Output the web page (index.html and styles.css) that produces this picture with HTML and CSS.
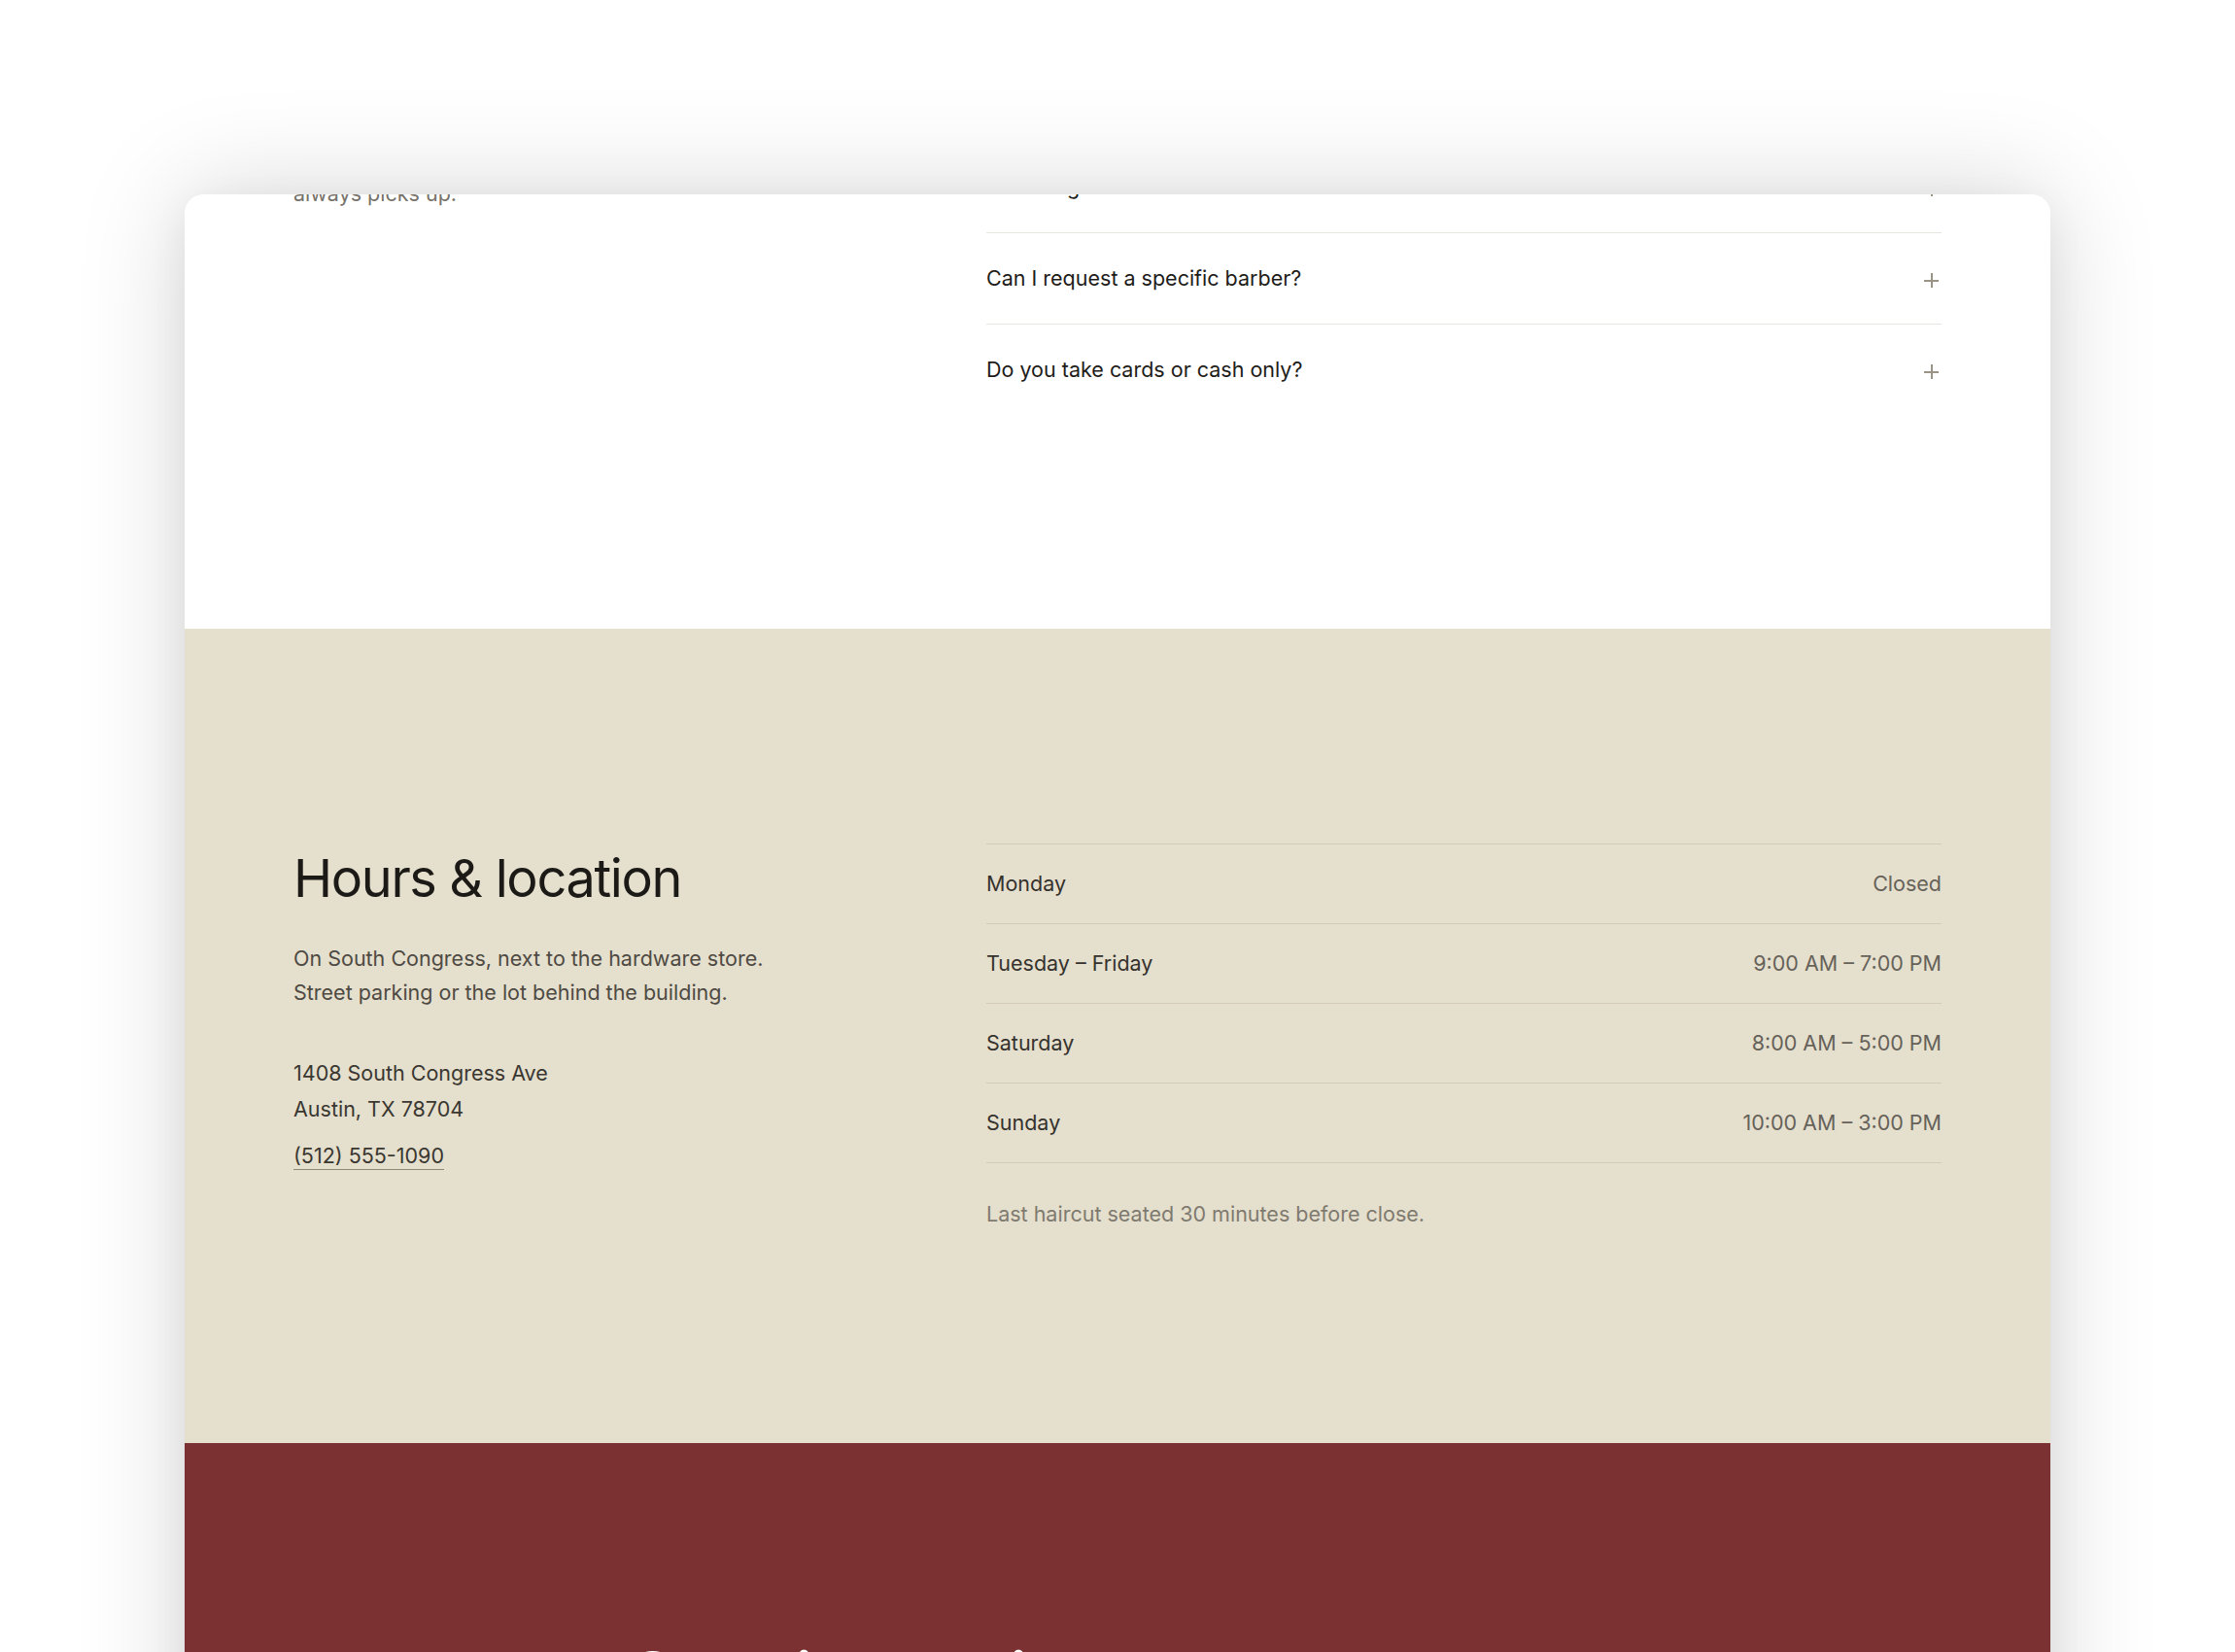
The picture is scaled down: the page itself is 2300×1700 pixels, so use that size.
FILE: index.html
```html
<!DOCTYPE html>
<html lang="en">
<head>
<meta charset="utf-8">
<title>Barbershop – Hours &amp; location</title>
<link rel="stylesheet" href="styles.css">
</head>
<body>
<div class="window">
  <div class="page">
    <section class="faq">
      <div class="container split">
        <div class="faq-intro">
          <h2 class="section-title">Questions</h2>
          <p class="lead">Anything else you want to know before you come in?<br>Most answers are right here. If not, give the<br>shop a ring during business hours — we keep<br>the phone behind the chair, and somebody<br>always picks up.</p>
        </div>
        <div class="faq-list">
          <div class="faq-item"><span class="q">Do I need an appointment?</span><span class="plus"></span></div>
          <div class="faq-item"><span class="q">Do you cut kids' hair?</span><span class="plus"></span></div>
          <div class="faq-item"><span class="q">How long does a haircut take?</span><span class="plus"></span></div>
          <div class="faq-item"><span class="q">Can I request a specific barber?</span><span class="plus"></span></div>
          <div class="faq-item"><span class="q">Do you take cards or cash only?</span><span class="plus"></span></div>
        </div>
      </div>
    </section>

    <section class="visit">
      <div class="container split">
        <div class="visit-info">
          <h2 class="section-title">Hours &amp; location</h2>
          <p class="lead dark">On South Congress, next to the hardware store.<br>Street parking or the lot behind the building.</p>
          <address class="address">1408 South Congress Ave<br>Austin, TX 78704</address>
          <a class="phone" href="tel:5125551090">(512) 555-1090</a>
        </div>
        <div class="hours">
          <div class="hours-table">
            <div class="hours-row"><span class="day">Monday</span><span class="time">Closed</span></div>
            <div class="hours-row"><span class="day">Tuesday – Friday</span><span class="time">9:00 AM – 7:00 PM</span></div>
            <div class="hours-row"><span class="day">Saturday</span><span class="time">8:00 AM – 5:00 PM</span></div>
            <div class="hours-row"><span class="day">Sunday</span><span class="time">10:00 AM – 3:00 PM</span></div>
          </div>
          <p class="note">Last haircut seated 30 minutes before close.</p>
        </div>
      </div>
    </section>

    <section class="cta">
      <h2 class="cta-title">Stop in anytime or book ahead</h2>
    </section>
  </div>
</div>
</body>
</html>
```
FILE: styles.css
```css
* { box-sizing: border-box; }

html, body {
  margin: 0;
  padding: 0;
}

body {
  height: 1700px;
  overflow: hidden;
  background: #ffffff;
  font-family: Inter, "Liberation Sans", Arial, sans-serif;
  color: #1e1c19;
  -webkit-font-smoothing: antialiased;
}

.window {
  width: 1920px;
  margin: 200px auto 0;
  background: #ffffff;
  border-radius: 20px;
  overflow: hidden;
  box-shadow: 0 0 110px rgba(0, 0, 0, 0.17), 0 10px 40px rgba(0, 0, 0, 0.05);
}

.page {
  margin-top: -403px;
}

.container {
  padding: 0 112px;
}

.split {
  display: grid;
  grid-template-columns: minmax(0, 1fr) 983px;
  column-gap: 64px;
  align-items: start;
}

.section-title {
  margin: 0;
  font-size: 54px;
  line-height: 65px;
  font-weight: 400;
  letter-spacing: -0.025em;
  color: #1c1a17;
}

.lead {
  margin: 20px 0 0;
  font-size: 21.5px;
  line-height: 35px;
  color: #77726a;
}

/* FAQ */
.faq {
  padding: 160px 0 220px;
  background: #ffffff;
}

.faq-item {
  display: flex;
  align-items: center;
  justify-content: space-between;
  border-top: 1px solid #e8e6e1;
  padding: 31px 0;
  line-height: 31px;
  font-size: 21.5px;
  color: #1e1c19;
}

.plus {
  position: relative;
  width: 15px;
  height: 15px;
  margin-right: 3px;
  margin-top: 4px;
  flex: none;
}

.plus::before,
.plus::after {
  content: "";
  position: absolute;
  background: #9a9486;
}

.plus::before {
  left: 0;
  right: 0;
  top: 7px;
  height: 1.5px;
}

.plus::after {
  top: 0;
  bottom: 0;
  left: 7px;
  width: 1.5px;
}

/* Hours & location */
.visit {
  background: #e5dfcd;
  padding: 221px 0 221px;
}

.visit-info {
  padding-top: 3px;
}

.visit-info .lead.dark {
  margin-top: 33px;
  color: #4e4a43;
}

.address {
  display: block;
  margin-top: 47px;
  font-style: normal;
  font-size: 21.5px;
  line-height: 37px;
  color: #3a3731;
}

.phone {
  display: inline-block;
  margin-top: 15px;
  font-size: 21.5px;
  line-height: 28px;
  color: #3a3731;
  text-decoration: none;
  border-bottom: 1px solid #8e887b;
}

.hours-table {
  border-bottom: 1px solid #d3cbb7;
}

.hours-row {
  display: flex;
  justify-content: space-between;
  align-items: center;
  border-top: 1px solid #d3cbb7;
  padding: 25px 0;
  font-size: 21.5px;
  line-height: 31px;
}

.day {
  color: #35322d;
}

.time {
  color: #66625a;
}

.note {
  margin: 37px 0 0;
  font-size: 21.5px;
  line-height: 30px;
  color: #7f7a70;
}

/* CTA */
.cta {
  background: #7b3131;
  padding: 201px 112px 200px;
  text-align: center;
}

.cta-title {
  margin: 0;
  font-size: 72px;
  line-height: 80px;
  font-weight: 500;
  letter-spacing: -0.02em;
  color: #ffffff;
}
```
